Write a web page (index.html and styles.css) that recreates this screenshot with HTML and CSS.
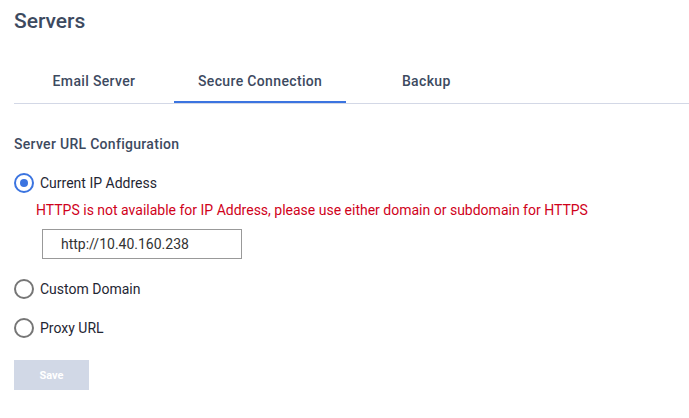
FILE: index.html
```html
<!DOCTYPE html>
<html>
<head>
<meta charset="utf-8">
<link rel="stylesheet" href="styles.css">
</head>
<body>
<div class="page">
  <h1 class="title">Servers</h1>
  <div class="tabs">
    <div class="tab">Email Server</div>
    <div class="tab active">Secure Connection</div>
    <div class="tab">Backup</div>
  </div>
  <div class="section">
    <div class="section-title">Server URL Configuration</div>
    <label class="radio-row">
      <span class="radio checked"></span>
      <span class="radio-label">Current IP Address</span>
    </label>
    <div class="error">HTTPS is not available for IP Address, please use either domain or subdomain for HTTPS</div>
    <div class="input">http://10.40.160.238</div>
    <label class="radio-row">
      <span class="radio"></span>
      <span class="radio-label">Custom Domain</span>
    </label>
    <label class="radio-row">
      <span class="radio"></span>
      <span class="radio-label">Proxy URL</span>
    </label>
    <button class="save">Save</button>
  </div>
</div>
</body>
</html>
```
FILE: styles.css
```css
* { box-sizing: border-box; }
html, body { margin: 0; padding: 0; background: #fff; }
body { font-family: Roboto, "Liberation Sans", sans-serif; color: #2b3445; }
.page { padding: 9px 0 0 14px; }
.title {
  margin: 0;
  font-size: 21px;
  font-weight: 500;
  line-height: 24px;
  color: #3d4a5f;
}
.tabs {
  display: flex;
  margin-top: 25px;
  border-bottom: 1px solid #d3d8e6;
}
.tab {
  min-width: 160px;
  padding: 3px 24px 0;
  text-align: center;
  font-size: 14px;
  font-weight: 500;
  letter-spacing: 0.35px;
  color: #3d4a5f;
  height: 45px;
  line-height: 40px;
  border-bottom: 2px solid transparent;
}
.tab.active { border-bottom-color: #3b74e0; }
.section { padding-top: 31px; }
.section-title {
  font-size: 14px;
  font-weight: 500;
  letter-spacing: 0.3px;
  color: #3d4a5f;
  line-height: 18px;
}
.radio-row {
  display: flex;
  align-items: center;
  gap: 6px;
  height: 20px;
}
.section-title + .radio-row { margin-top: 20px; }
.radio {
  width: 20px;
  height: 20px;
  border-radius: 50%;
  border: 2px solid #767676;
  display: flex;
  align-items: center;
  justify-content: center;
  flex: none;
}
.radio.checked { border-color: #3b74e0; }
.radio.checked::after {
  content: "";
  width: 8px;
  height: 8px;
  border-radius: 50%;
  background: #3b74e0;
}
.radio-label {
  font-size: 14px;
  color: #1f2633;
}
.error {
  margin: 8px 0 0 22px;
  font-size: 14px;
  line-height: 18px;
  color: #d0021b;
}
.input {
  margin: 10px 0 0 28px;
  width: 200px;
  height: 30px;
  border: 1px solid #999;
  padding-left: 18px;
  line-height: 28px;
  font-size: 14px;
  color: #333;
}
.input + .radio-row { margin-top: 20px; }
.radio-row + .radio-row { margin-top: 19px; }
.save {
  display: block;
  margin-top: 22px;
  width: 75px;
  height: 30px;
  border: none;
  background: #d1d8e6;
  color: #fff;
  font-family: Roboto, "Liberation Sans", sans-serif;
  font-size: 11px;
  font-weight: 700;
  padding: 0;
}
```
